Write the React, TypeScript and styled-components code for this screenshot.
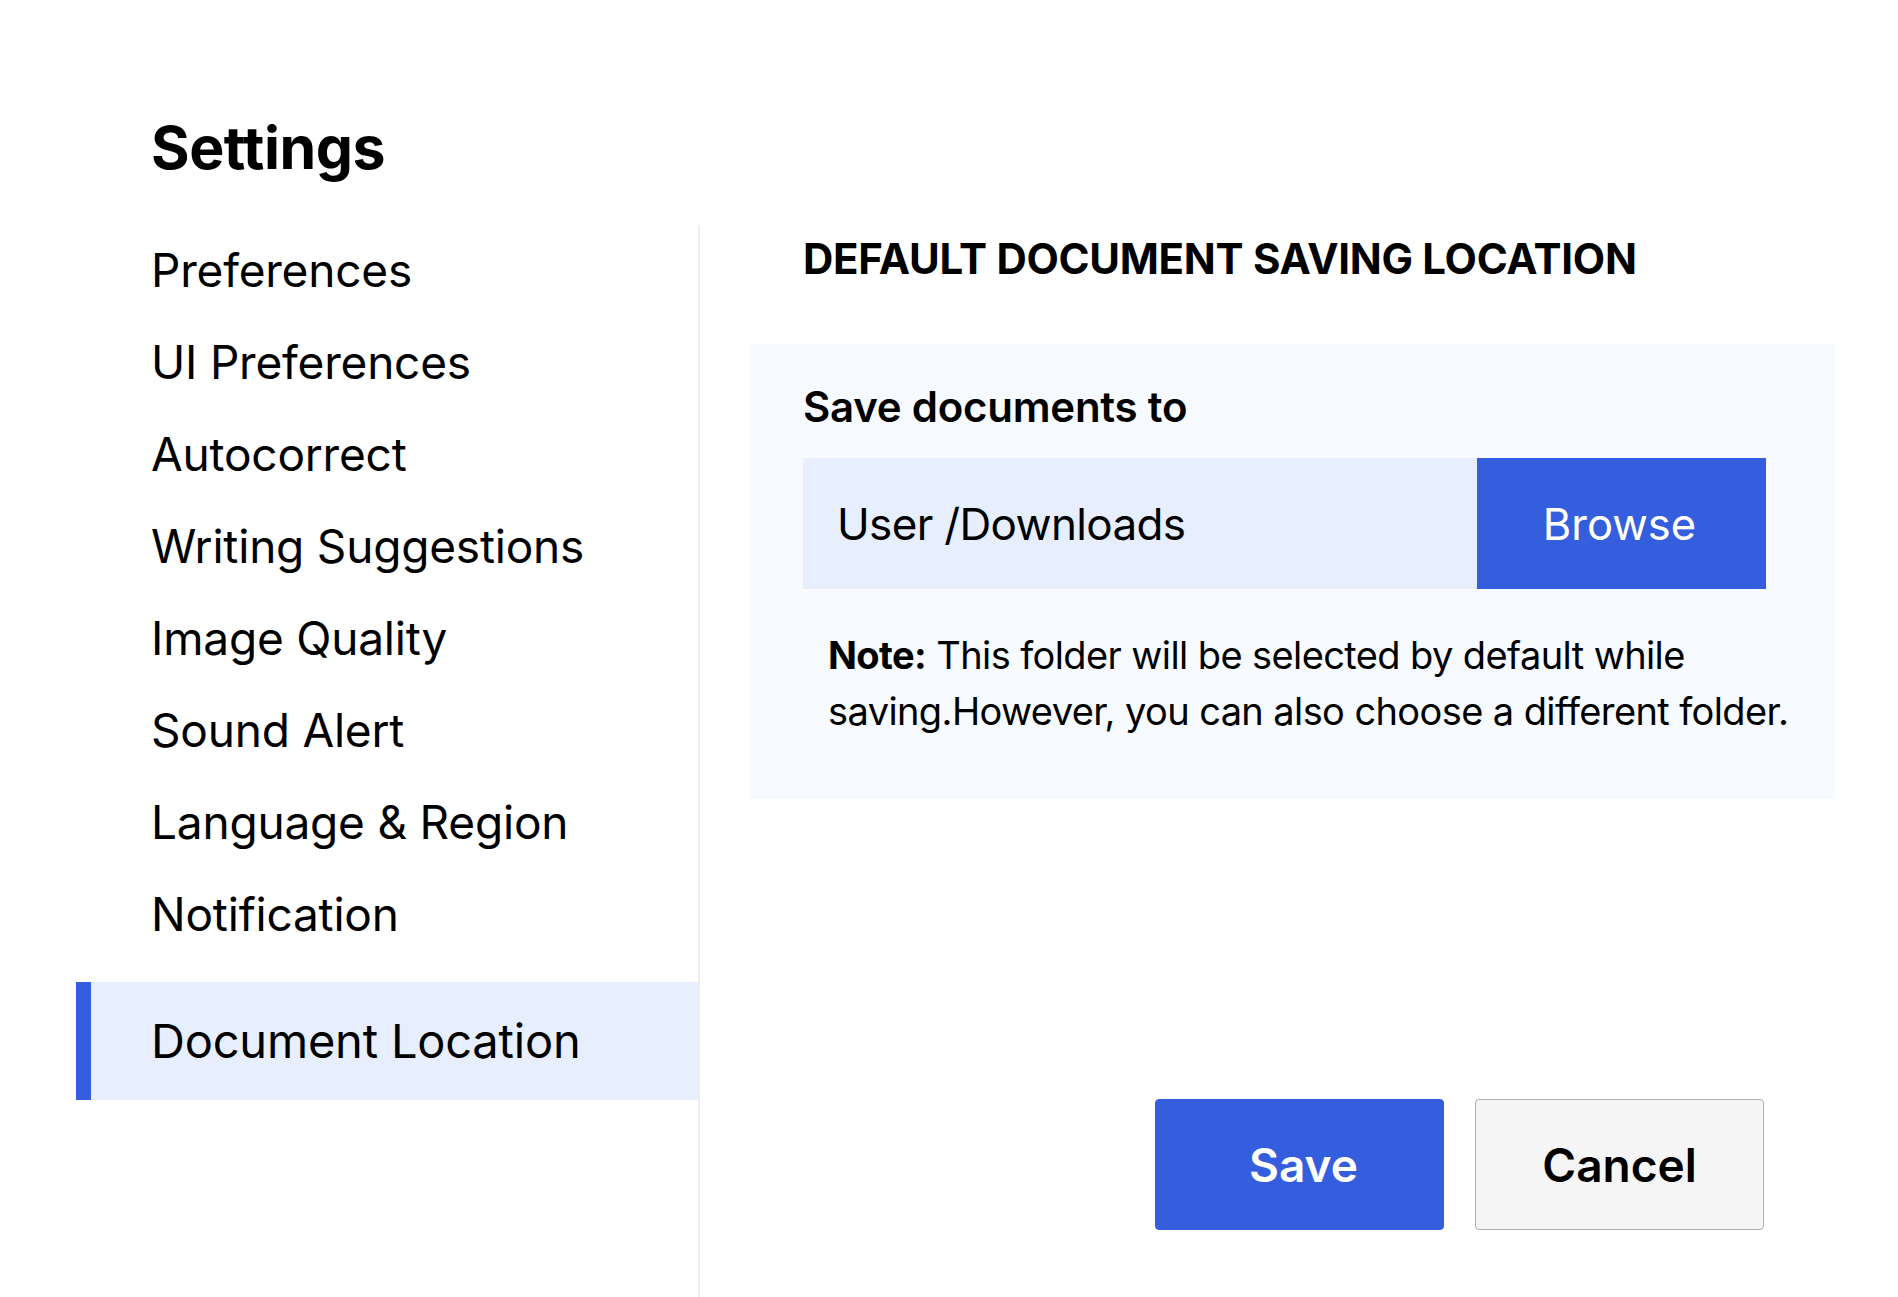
import React from "react";
import styled, { createGlobalStyle } from "styled-components";

const GlobalStyle = createGlobalStyle`
  html, body {
    margin: 0;
    padding: 0;
    background: #fff;
  }
  body {
    font-family: Inter, "Liberation Sans", sans-serif;
    color: #000;
  }
`;

const Page = styled.div`
  width: 1898px;
  height: 1297px;
  overflow: hidden;
  display: flex;
  flex-direction: column;
  box-sizing: border-box;
  padding: 114px 0 0 76px;
`;

const Title = styled.h1`
  margin: 0 0 0 75px;
  font-size: 59px;
  line-height: 68px;
  font-weight: 700;
  letter-spacing: -0.5px;
`;

const Columns = styled.div`
  display: flex;
  flex: 1;
  margin-top: 43px;
`;

const Sidebar = styled.nav`
  width: 622px;
  flex: none;
  border-right: 2px solid #eeeeee;
`;

const NavItem = styled.div<{ $active?: boolean }>`
  display: flex;
  align-items: center;
  box-sizing: border-box;
  height: ${(p) => (p.$active ? "118px" : "92px")};
  margin-top: ${(p) => (p.$active ? "21px" : "0")};
  padding-left: ${(p) => (p.$active ? "60px" : "75px")};
  padding-bottom: 2px;
  border-left: ${(p) => (p.$active ? "15px solid #355ede" : "none")};
  background: ${(p) => (p.$active ? "#e7eefe" : "transparent")};
  font-size: ${(p) => (p.$active ? "47px" : "46px")};
  letter-spacing: -0.2px;
`;

const Content = styled.main`
  flex: 1;
  display: flex;
  flex-direction: column;
  padding-left: 50px;
`;

const Heading = styled.h2`
  margin: 0 0 0 53px;
  font-size: 42px;
  line-height: 68px;
  font-weight: 700;
  letter-spacing: -0.3px;
`;

const Panel = styled.section`
  width: 1085px;
  height: 455px;
  box-sizing: border-box;
  margin-top: 51px;
  padding: 35px 0 0 53px;
  background: #f7faff;
`;

const Label = styled.div`
  font-size: 42px;
  line-height: 56px;
  font-weight: 600;
  letter-spacing: -0.25px;
`;

const PathRow = styled.div`
  display: flex;
  width: 963px;
  height: 131px;
  margin-top: 23px;
`;

const PathField = styled.div`
  flex: 1;
  display: flex;
  align-items: center;
  padding-left: 34px;
  background: #e7eefe;
  font-size: 44px;
  letter-spacing: -0.65px;
`;

const Browse = styled.button`
  width: 289px;
  border: none;
  padding: 0 4px 0 0;
  background: #355ede;
  color: #fff;
  font: inherit;
  font-size: 43.5px;
`;

const Note = styled.p`
  margin: 39px 0 0 25px;
  font-size: 38px;
  line-height: 55.5px;
  letter-spacing: -0.6px;
  white-space: nowrap;
`;

const Actions = styled.div`
  display: flex;
  gap: 31px;
  margin: 300px 0 0 405px;
`;

const ActionButton = styled.button<{ $primary?: boolean }>`
  width: 289px;
  height: 131px;
  padding: ${(p) => (p.$primary ? "0 0 0 8px" : "0")};
  border-radius: 4px;
  border: 1px solid ${(p) => (p.$primary ? "#355ede" : "#b0b0b0")};
  background: ${(p) => (p.$primary ? "#355ede" : "#f5f5f5")};
  color: ${(p) => (p.$primary ? "#fff" : "#000")};
  font-family: inherit;
  font-size: 46px;
  font-weight: 600;
`;

const items = [
  "Preferences",
  "UI Preferences",
  "Autocorrect",
  "Writing Suggestions",
  "Image Quality",
  "Sound Alert",
  "Language & Region",
  "Notification",
];

export default function App() {
  return (
    <Page>
      <GlobalStyle />
      <Title>Settings</Title>
      <Columns>
        <Sidebar>
          {items.map((item) => (
            <NavItem key={item}>{item}</NavItem>
          ))}
          <NavItem $active>Document Location</NavItem>
        </Sidebar>
        <Content>
          <Heading>DEFAULT DOCUMENT SAVING LOCATION</Heading>
          <Panel>
            <Label>Save documents to</Label>
            <PathRow>
              <PathField>User /Downloads</PathField>
              <Browse>Browse</Browse>
            </PathRow>
            <Note>
              <b>Note:</b> This folder will be selected by default while
              <br />
              saving.However, you can also choose a different folder.
            </Note>
          </Panel>
          <Actions>
            <ActionButton $primary>Save</ActionButton>
            <ActionButton>Cancel</ActionButton>
          </Actions>
        </Content>
      </Columns>
    </Page>
  );
}
